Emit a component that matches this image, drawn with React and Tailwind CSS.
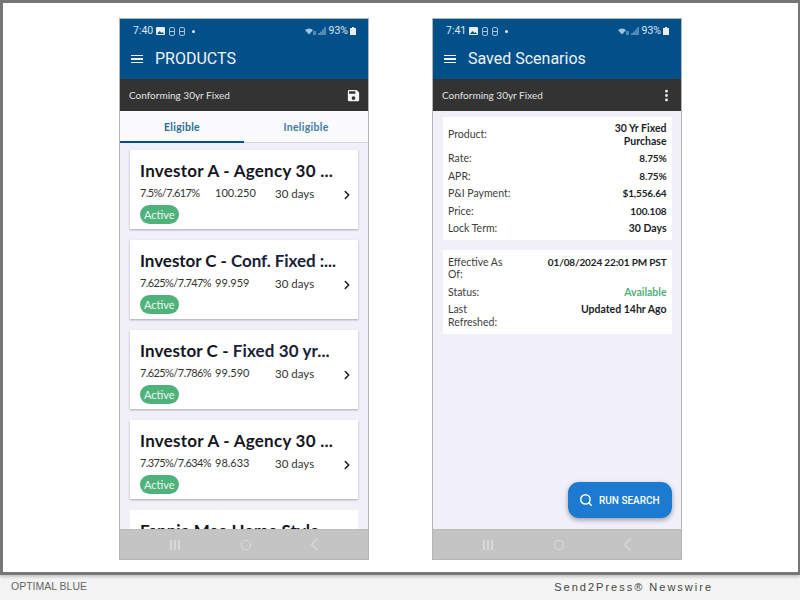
import { ChevronRight, EllipsisVertical, Search } from "lucide-react";

const products = [
  { lead: "Investor A - Agency 30 ...", rest: "", rate: "7.5%/7.617%", price: "100.250", tracking: "tracking-[0.25px]" },
  { lead: "Investor C - ", rest: "Conf. Fixed :...", rate: "7.625%/7.747%", price: "99.959", tracking: "tracking-[-0.05px]" },
  { lead: "Investor C - ", rest: "Fixed 30 yr...", rate: "7.625%/7.786%", price: "99.590", tracking: "tracking-[0.1px]" },
  { lead: "Investor A - Agency 30 ...", rest: "", rate: "7.375%/7.634%", price: "98.633", tracking: "tracking-[0.25px]" },
];

const numberValue = "text-[10px] tracking-[-0.15px] text-[#1b1e26]";
const wordValue = "text-[10.500px] text-[#1b1e26]";

const scenario = [
  { label: "Rate:", value: "8.75%", cls: numberValue },
  { label: "APR:", value: "8.75%", cls: numberValue },
  { label: "P&I Payment:", value: "$1,556.64", cls: numberValue },
  { label: "Price:", value: "100.108", cls: numberValue },
  { label: "Lock Term:", value: "30 Days", cls: wordValue },
];

const Pill = () => (
  <svg width="6" height="9" viewBox="0 0 6 9">
    <rect x="0.500" y="0.500" width="5" height="8" rx="1.500" fill="none" stroke="#a9c3d8" />
    <path d="M0.500 4.500h5" stroke="#a9c3d8" />
  </svg>
);

const StatusBar = ({ time }) => (
  <div className="h-[24px] flex items-center justify-between pl-[13px] pr-[12px] text-[10.500px] text-[#dfe8f0] font-['Roboto',sans-serif]">
    <div className="flex items-center">
      <span className="w-[23px]">{time}</span>
      <svg width="9" height="8" viewBox="0 0 9 8">
        <rect width="9" height="8" rx="1" fill="#e8eef3" />
        <path d="M1 7l2.500-3 2 2 1-1 1.500 2z" fill="#01508a" />
      </svg>
      <span className="ml-[4px]"><Pill /></span>
      <span className="ml-[4px]"><Pill /></span>
      <span className="ml-[7px] w-[3px] h-[3px] rounded-full bg-[#e8eef3]" />
    </div>
    <div className="flex items-center gap-[2px]">
      <svg width="11" height="8" viewBox="0 0 11 8">
        <path d="M0 3a6 6 0 0 1 8 0L4 7.500z" fill="#a9c3d8" />
        <path d="M8 5l3 0M8 7l3 0" stroke="#a9c3d8" />
      </svg>
      <svg width="8" height="8" viewBox="0 0 8 8">
        <path d="M1 8V6M3 8V4.500M5 8V2.500M7 8V0" stroke="#a9c3d8" />
      </svg>
      <span className="ml-[1px]">93%</span>
      <svg width="6" height="8" viewBox="0 0 6 8">
        <path d="M2 0h2v1h2v7H0V1h2z" fill="#e8eef3" />
      </svg>
    </div>
  </div>
);

const Menu = () => (
  <div className="flex flex-col gap-[2px] w-[12px]">
    <span className="h-[1.500px] bg-[#eef3f7]" />
    <span className="h-[1.500px] bg-[#eef3f7]" />
    <span className="h-[1.500px] bg-[#eef3f7]" />
  </div>
);

const NavBar = () => (
  <div className="h-[30px] shrink-0 bg-[#c4c4c4] border-t border-[#bbbbbb] flex items-center justify-between pl-[50px] pr-[50px]">
    <div className="flex gap-[2px]">
      <span className="w-[2px] h-[10px] bg-[#d8d8d8]" />
      <span className="w-[2px] h-[10px] bg-[#d8d8d8]" />
      <span className="w-[2px] h-[10px] bg-[#d8d8d8]" />
    </div>
    <div className="w-[10px] h-[10px] rounded-[4px] border border-[#d8d8d8]" />
    <svg width="7" height="13" viewBox="0 0 7 13" fill="none" stroke="#d8d8d8" strokeWidth="1.200">
      <path d="M6.500 0.500L0.700 6.500l5.800 6" />
    </svg>
  </div>
);

const Phone = ({ time, title, action, children }) => (
  <div className="relative w-[250px] h-[542px] flex flex-col overflow-hidden border border-[#b4b4b4] bg-[#f1eff7]">
    <div className="h-[60px] shrink-0 bg-[#01508a] text-white">
      <StatusBar time={time} />
      <div className="flex items-center gap-[12px] pl-[11px] h-[32px]">
        <Menu />
        <span className="text-[16px] font-['Roboto',sans-serif] text-[#eef3f7]">{title}</span>
      </div>
    </div>
    <div className="h-[32px] shrink-0 bg-[#333333] flex items-center justify-between pl-[9px] pr-[7px] text-[10px] text-[#e2e2e2] pt-[1px]">
      <span>Conforming 30yr Fixed</span>
      {action}
    </div>
    {children}
    <NavBar />
  </div>
);

const ProductCard = ({ item }) => (
  <div className="h-[79px] shrink-0 bg-white shadow-[0_1px_2px_rgba(0,0,0,0.3)] pl-[10px] pr-[4px] pt-[10px]">
    <div className={`text-[17px] leading-[21px] font-bold text-[#14171f] whitespace-nowrap ${item.tracking}`}>
      {item.lead}
      <span className="text-[#1a2238]">{item.rest}</span>
    </div>
    <div className="flex items-center text-[11px] text-[#333333] h-[19px] mt-[3px]">
      <span className="w-[75px] shrink-0 whitespace-nowrap tracking-[-0.6px]">{item.rate}</span>
      <span className="w-[60px] shrink-0">{item.price}</span>
      <span className="w-[65px] shrink-0 text-[11.500px]">30 days</span>
      <ChevronRight size={14} strokeWidth={2.500} className="shrink-0 text-[#14171f] mt-[2px]" />
    </div>
    <div className="w-fit bg-[#4fb27a] text-[#eaf6ef] text-[11px] leading-[19px] px-[4px] rounded-full mt-[2px]">Active</div>
  </div>
);

const Row = ({ label, value, valueClass }) => (
  <div className="flex justify-between items-start leading-[12.500px] py-[2.500px]">
    <span className="text-[10.500px] text-[#3c3c3c] w-[66px] shrink-0">{label}</span>
    <span className={`font-bold text-right ${valueClass}`}>{value}</span>
  </div>
);

export default function App() {
  return (
    <div className="w-[800px] h-[600px] flex flex-col bg-[#f4f4f4] font-['Lato',sans-serif] overflow-hidden">
      <div className="h-[575px] shrink-0 bg-white border-t-[3px] border-b-[3px] border-l-[3px] border-r-[2px] border-[#777777] pt-[15px] pl-[116px] pr-[116px] flex justify-between items-start shadow-[0_2px_3px_rgba(0,0,0,0.2)]">
        <Phone
          time="7:40"
          title="PRODUCTS"
          action={
            <svg width="15" height="15" viewBox="0 0 24 24" fill="#f4f4f4">
              <path d="M17 3H5a2 2 0 0 0-2 2v14a2 2 0 0 0 2 2h14a2 2 0 0 0 2-2V7l-4-4zm-5 16a3 3 0 1 1 0-6 3 3 0 0 1 0 6zm3-10H5V5h10v4z" />
            </svg>
          }
        >
          <div className="h-[32px] shrink-0 bg-[#fbfafd] flex text-[10.500px] font-bold tracking-[0.3px]">
            <div className="w-1/2 flex items-center justify-center text-[#2a6c96] border-b-2 border-[#01508a] pt-[4px]">Eligible</div>
            <div className="w-1/2 flex items-center justify-center text-[#3f7ca3] border-b border-[#d5d5dc] pt-[3px]">Ineligible</div>
          </div>
          <div className="flex-1 overflow-hidden flex flex-col gap-[11px] px-[10px] pt-[7px]">
            {products.map((item, i) => (
              <ProductCard key={i} item={item} />
            ))}
            <div className="h-[79px] shrink-0 bg-white pl-[10px] pt-[10px] text-[17px] leading-[21px] font-bold text-[#14171f] whitespace-nowrap">
              Fannie Mae Home Style
            </div>
          </div>
        </Phone>

        <Phone
          time="7:41"
          title="Saved Scenarios"
          action={<EllipsisVertical size={15} strokeWidth={2.500} className="text-[#f4f4f4]" />}
        >
          <div className="flex-1 flex flex-col gap-[10px] pl-[10px] pr-[9.500px] pt-[6px]">
            <div className="bg-white px-[5px] pt-[2.500px] pb-[3px]">
              <div className="flex justify-between items-center leading-[12.500px] py-[2.500px]">
                <span className="text-[10.500px] text-[#3c3c3c]">Product:</span>
                <span className="text-[10.500px] font-bold text-right text-[#1b1e26]">
                  30 Yr Fixed
                  <br />
                  Purchase
                </span>
              </div>
              {scenario.map((row) => (
                <Row key={row.label} label={row.label} value={row.value} valueClass={row.cls} />
              ))}
            </div>
            <div className="bg-white px-[5px] py-[3px]">
              <Row label="Effective As Of:" value="01/08/2024 22:01 PM PST" valueClass={numberValue} />
              <Row label="Status:" value="Available" valueClass="text-[10.500px] text-[#4fb27a]" />
              <Row label="Last Refreshed:" value="Updated 14hr Ago" valueClass={wordValue} />
            </div>
          </div>
          <div className="absolute right-[9px] bottom-[41px] w-[104px] h-[36px] rounded-[11px] bg-[#1c7bd0] shadow-[0_2px_5px_rgba(0,0,0,0.35)] flex items-center pl-[11px] gap-[6px] text-white text-[10px] font-medium font-['Roboto',sans-serif]">
            <Search size={14} strokeWidth={2.500} />
            <span>RUN SEARCH</span>
          </div>
        </Phone>
      </div>
      <div className="flex-1 flex items-center justify-between pl-[11px] pr-[87px] pb-[1px]">
        <span className="text-[10.500px] text-[#666666] font-['Liberation_Sans',sans-serif]">OPTIMAL BLUE</span>
        <span className="text-[11px] text-[#444444] tracking-[2px] font-['Liberation_Sans',sans-serif]">Send2Press® Newswire</span>
      </div>
    </div>
  );
}
